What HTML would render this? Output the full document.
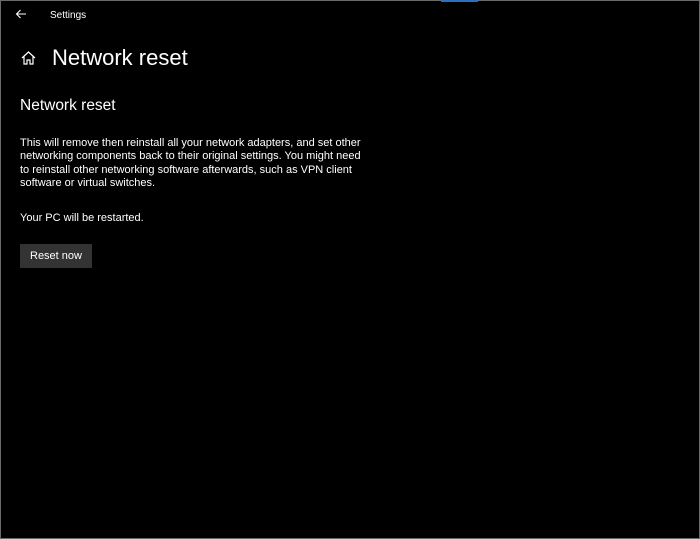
<!DOCTYPE html><html><head><style>
body{margin:0;width:700px;height:539px;background:#000;overflow:hidden;font-family:"Liberation Sans",sans-serif;color:#fff;position:relative}
.frame{position:absolute;left:0;top:0;width:698px;height:537px;border:1px solid #6a6a6a}
.blue{position:absolute;left:441px;top:0;width:37px;height:2px;background:#2a6fc0}
.t{position:absolute;white-space:nowrap}
</style></head><body>
<div class="frame"></div><div class="blue"></div>
<svg class="t" style="left:15px;top:9px" width="12" height="10" viewBox="0 0 12 10"><path d="M11 5H1.5M5.5 1L1.5 5L5.5 9" stroke="#fff" stroke-width="1.1" fill="none"/></svg>
<div class="t" style="left:50px;top:10px;font-size:10px">Settings</div>
<svg class="t" style="left:21px;top:51px" width="15" height="14" viewBox="0 0 15 14"><path d="M1 7L7.5 1L14 7M3 5.5V13H6V9H9V13H12V5.5" stroke="#fff" stroke-width="1.2" fill="none"/></svg>
<div class="t" style="left:52px;top:45px;font-size:22px">Network reset</div>
<div class="t" style="left:20px;top:97px;font-size:15.5px">Network reset</div>
<div class="t" style="left:20px;top:137px;font-size:11px;line-height:13.3px">This will remove then reinstall all your network adapters, and set other<br>networking components back to their original settings. You might need<br>to reinstall other networking software afterwards, such as VPN client<br>software or virtual switches.</div>
<div class="t" style="left:20px;top:212px;font-size:11px">Your PC will be restarted.</div>
<div class="t" style="left:20px;top:244px;width:72px;height:24px;background:#333;font-size:11px;line-height:24px;text-align:center">Reset now</div>
</body></html>
